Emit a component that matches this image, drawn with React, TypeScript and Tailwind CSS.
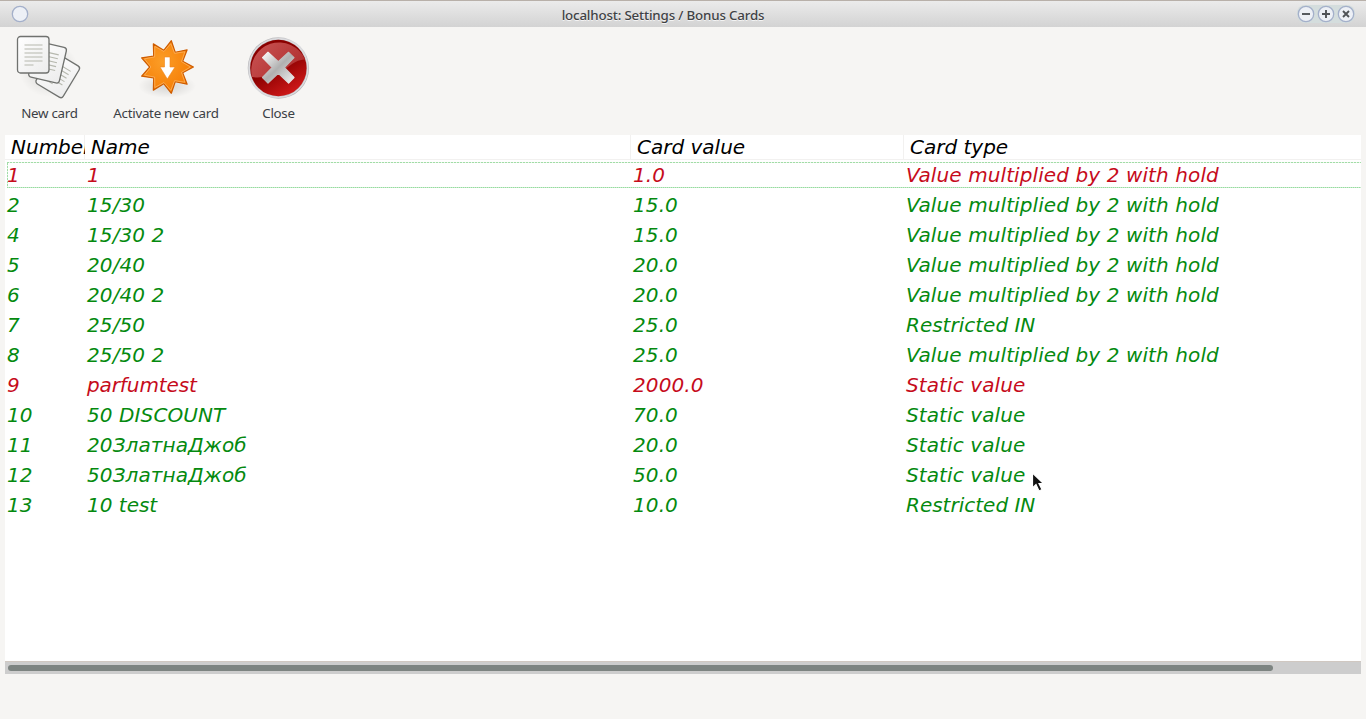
import React from "react";

type Card = { id: string; name: string; value: string; type: string; off?: boolean };

const HOLD = "Value multiplied by 2 with hold";
const cards: Card[] = [
  { id: "1", name: "1", value: "1.0", type: HOLD, off: true },
  { id: "2", name: "15/30", value: "15.0", type: HOLD },
  { id: "4", name: "15/30 2", value: "15.0", type: HOLD },
  { id: "5", name: "20/40", value: "20.0", type: HOLD },
  { id: "6", name: "20/40 2", value: "20.0", type: HOLD },
  { id: "7", name: "25/50", value: "25.0", type: "Restricted IN" },
  { id: "8", name: "25/50 2", value: "25.0", type: HOLD },
  { id: "9", name: "parfumtest", value: "2000.0", type: "Static value", off: true },
  { id: "10", name: "50 DISCOUNT", value: "70.0", type: "Static value" },
  { id: "11", name: "20ЗлатнаДжоб", value: "20.0", type: "Static value" },
  { id: "12", name: "50ЗлатнаДжоб", value: "50.0", type: "Static value" },
  { id: "13", name: "10 test", value: "10.0", type: "Restricted IN" },
];

const grid = "grid grid-cols-[80px_546px_273px_457px]";

function starPoints(cx: number, cy: number, outer: number, inner: number) {
  return Array.from({ length: 18 }, (_, i) => {
    const r = i % 2 ? inner : outer;
    const a = (i * Math.PI) / 9;
    return `${(cx + r * Math.cos(a)).toFixed(2)},${(cy + r * Math.sin(a)).toFixed(2)}`;
  }).join(" ");
}

function Sheet() {
  return (
    <g>
      <rect x="0" y="0" width="31.5" height="36.5" rx="3" fill="url(#paper)" stroke="#70726f" strokeWidth="1.3" />
      <path d="M7 8.5H25M7 12.5H25M7 16.5H25M7 20.5H25M7 24.5H25M7 28.5H16" stroke="#b6b8ae" strokeWidth="1.1" />
    </g>
  );
}

function NewCardIcon() {
  return (
    <svg className="h-[68px] w-[68px]" viewBox="0 0 68 68">
      <defs>
        <linearGradient id="paper" x1="0" y1="0" x2="1" y2="1">
          <stop offset="0" stopColor="#fff" />
          <stop offset="1" stopColor="#ececec" />
        </linearGradient>
        <radialGradient id="soft">
          <stop offset="0" stopColor="#000" stopOpacity="0.14" />
          <stop offset="1" stopColor="#000" stopOpacity="0" />
        </radialGradient>
      </defs>
      <ellipse cx="34" cy="36" rx="30" ry="27" fill="url(#soft)" />
      <g transform="translate(38.600 17.200) rotate(31)"><Sheet /></g>
      <g transform="translate(21.300 7) rotate(13)"><Sheet /></g>
      <g transform="translate(2.500 2.500)"><Sheet /></g>
    </svg>
  );
}

function ActivateIcon() {
  return (
    <svg className="h-[68px] w-[68px]" viewBox="0 0 68 68">
      <defs>
        <radialGradient id="orange" cx=".4" cy=".4" r=".7">
          <stop offset="0" stopColor="#fb9d27" />
          <stop offset="1" stopColor="#f57900" />
        </radialGradient>
      </defs>
      <ellipse cx="35" cy="52" rx="29" ry="12" fill="url(#soft)" />
      <polygon points={starPoints(34.7, 33, 26.7, 17)} fill="url(#orange)" stroke="#ce5c00" strokeWidth="1.2" strokeLinejoin="round" />
      <polygon points={starPoints(34.7, 33, 23.7, 15.8)} fill="none" stroke="#fcb35e" strokeWidth=".8" />
      <path d="M32.500 23H38V33H43L35.300 45L28 33H32.500Z" fill="#fff" stroke="#f0851b" strokeWidth=".6" />
    </svg>
  );
}

function CloseIcon() {
  return (
    <svg className="h-[68px] w-[68px]" viewBox="0 0 68 68">
      <defs>
        <linearGradient id="ring" x1="0" y1="0" x2="1" y2="1">
          <stop offset="0" stopColor="#a4a4a7" />
          <stop offset=".5" stopColor="#d9d9dc" />
          <stop offset="1" stopColor="#a3a3a5" />
        </linearGradient>
        <linearGradient id="red" x1=".2" y1="0" x2=".8" y2="1">
          <stop offset=".45" stopColor="#8a0000" />
          <stop offset="1" stopColor="#d81c1c" />
        </linearGradient>
        <linearGradient id="gloss" x1="0" y1="0" x2="1" y2=".6">
          <stop offset="0" stopColor="#ca5555" />
          <stop offset="1" stopColor="#b02f2f" />
        </linearGradient>
        <linearGradient id="cross" x1="0" y1="0" x2="1" y2="1">
          <stop offset="0" stopColor="#fff" />
          <stop offset=".5" stopColor="#b0b0b0" />
          <stop offset="1" stopColor="#f2f2f2" />
        </linearGradient>
      </defs>
      <circle cx="34.400" cy="34" r="30.700" fill="url(#ring)" />
      <circle cx="34.400" cy="34" r="29.300" fill="none" stroke="#dcdcdf" strokeWidth="1.400" />
      <circle cx="34.400" cy="34" r="28.200" fill="url(#red)" />
      <path d="M8 43A28 28 0 0 1 61 25.500C47 26 43 38 29 41Q17 44.500 8 43Z" fill="url(#gloss)" />
      <path d="M24 18.300L34.300 27.700L44.600 18.300L50 23.700L40.300 33.500L50 43.500L44.600 49L34.300 39.300L24 49L18.500 43.500L28.300 33.500L18.500 23.700Z" fill="url(#cross)" stroke="url(#cross)" strokeWidth="1.200" strokeLinejoin="round" />
    </svg>
  );
}

function WindowButton({ d }: { d?: string }) {
  return (
    <svg className="size-[18px]" viewBox="0 0 18 18">
      <circle cx="9" cy="9" r="7.700" fill="#edf0f6" stroke="#a4b0ca" strokeWidth="1.300" />
      {d && <path d={d} stroke="#505357" strokeWidth="1.900" fill="none" />}
    </svg>
  );
}

function Tool({ label, className, children }: { label: string; className: string; children: React.ReactNode }) {
  return (
    <div className={`flex flex-col items-center ${className}`}>
      {children}
      <span className="mt-px pl-px text-[13.33px] leading-[20px] tracking-[-0.27px] whitespace-nowrap text-[#3b4045]">{label}</span>
    </div>
  );
}

function tracking(text: string) {
  if (text === "Restricted IN" || text === "10 test") return "tracking-normal";
  if (text === "parfumtest") return "tracking-[-0.1px]";
  return "tracking-[0.1px]";
}

export default function App() {
  return (
    <div className="relative flex h-[719px] w-[1366px] flex-col overflow-hidden bg-[#f6f5f3] font-['Noto_Sans',sans-serif]">
      <header className="flex h-[27px] items-center border-t border-[#b8b0a9] bg-linear-to-b from-[#ebebeb] to-[#d3d3d3] px-[11px]">
        <div className="flex w-[58px]"><WindowButton /></div>
        <h1 className="flex-1 pt-px pr-[40px] text-center text-[13.33px] leading-[18px] font-medium tracking-[-0.17px] text-[#3f4245] [text-shadow:0_1px_0_#f4f4f4]">
          localhost: Settings / Bonus Cards
        </h1>
        <div className="flex gap-[2px] rounded-lg bg-[#d4dddd]">
          <WindowButton d="M5 9H13" />
          <WindowButton d="M5 9H13M9 5V13" />
          <WindowButton d="M6 6L12 12M12 6L6 12" />
        </div>
      </header>

      <nav className="flex h-[108px] pt-[7px]">
        <Tool label="New card" className="w-[98px]"><NewCardIcon /></Tool>
        <Tool label="Activate new card" className="w-[135px]"><ActivateIcon /></Tool>
        <Tool label="Close" className="w-[90px]"><CloseIcon /></Tool>
      </nav>

      <main className="mx-[5px] flex h-[539px] flex-col bg-white font-['DejaVu_Sans',sans-serif] text-[20px] italic">
        <div className={`${grid} h-[25px] border-b border-[#f2f1f0] leading-[24px] text-black`}>
          <div className="overflow-hidden pl-[6px] shadow-[inset_-1px_0_#f2f1f0]">Number</div>
          <div className="border-r border-[#f2f1f0] pl-[6px] tracking-[-0.1px]">Name</div>
          <div className="border-r border-[#f2f1f0] pl-[6px]">Card value</div>
          <div className="pl-[6px]">Card type</div>
        </div>
        <div className="flex-1">
          {cards.map((c) => (
            <div key={c.id} className={`${grid} h-[30px] pt-[2px] leading-[26px] ${c.off ? "text-[#c60c1c]" : "text-[#058a0f]"}`}>
              <div className="pl-[2px]">{c.id}</div>
              <div className={`pl-[2px] ${tracking(c.name)}`}>{c.name}</div>
              <div className={`pl-[2px] ${tracking(c.value)}`}>{c.value}</div>
              <div className={`pl-[2px] ${tracking(c.type)}`}>{c.type}</div>
            </div>
          ))}
        </div>
        <div className="h-[13px] border-t border-[#d0c8c1] bg-[#cdcdcd] pt-[3px] pl-[3px]">
          <div className="h-[6px] w-[1265px] rounded-full bg-[#7d8481]" />
        </div>
      </main>

      <div className="absolute top-[162px] left-[7px] flex h-[26px] w-[1354px] flex-col justify-between">
        <div className="h-px bg-[repeating-linear-gradient(90deg,#a2dca7_0_2px,#e8f7e9_2px_3px)]" />
        <div className="w-px flex-1 bg-[repeating-linear-gradient(180deg,#a2dca7_0_2px,#e8f7e9_2px_3px)]" />
        <div className="h-px bg-[repeating-linear-gradient(90deg,#96dba0_0_1px,#c5ebc9_1px_2px)]" />
      </div>
      <svg className="absolute top-[471px] left-[1031px] h-[22px] w-[14px]" viewBox="0 0 14 22">
        <path d="M1.500 2V17L5 13.500L8 20L11 18.500L8 12.500H12.500Z" fill="#111" stroke="#fff" strokeWidth="1.200" />
      </svg>
    </div>
  );
}
